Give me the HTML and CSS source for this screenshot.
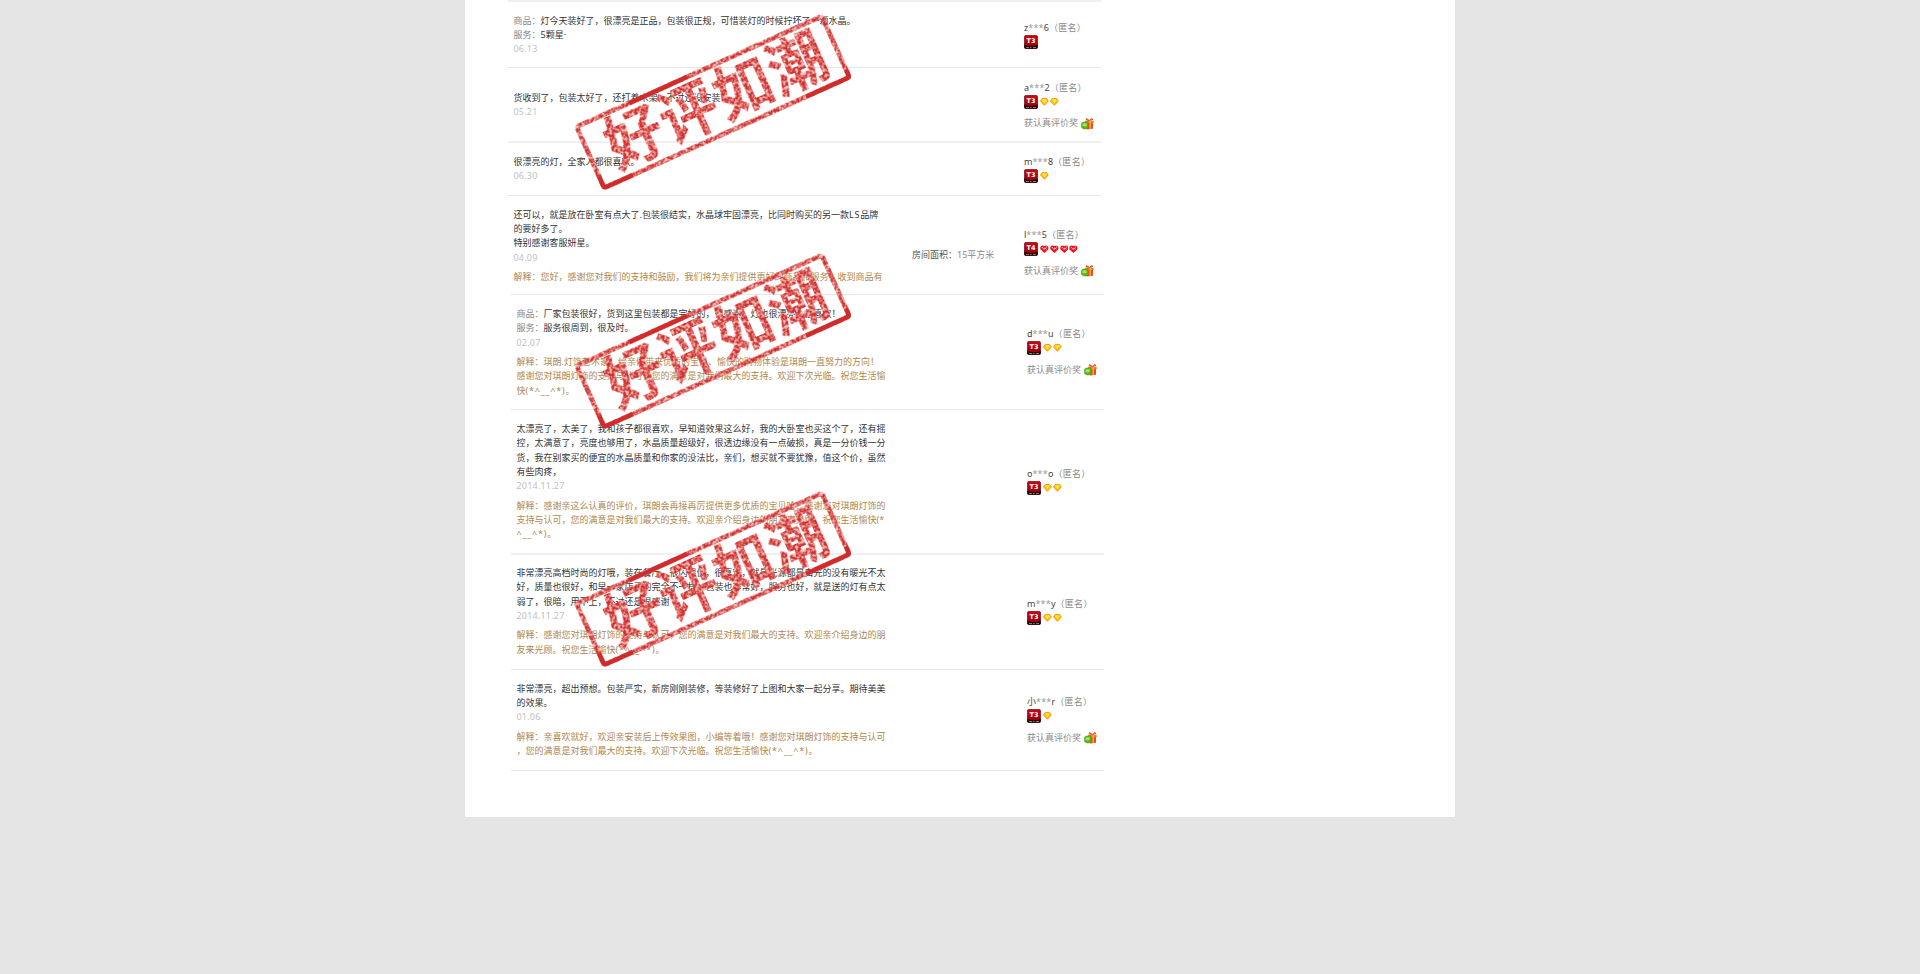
FILE: index.html
```html
<!DOCTYPE html>
<html lang="zh-CN">
<head>
<meta charset="utf-8">
<title>好评如潮</title>
<link rel="stylesheet" href="styles.css">
</head>
<body>
<svg class="defs" aria-hidden="true">
  <defs>
    <linearGradient id="g-badge" x1="0" y1="0" x2="0" y2="1">
      <stop offset="0" stop-color="#c80a14"/><stop offset=".7" stop-color="#a3000c"/><stop offset="1" stop-color="#5a0006"/>
    </linearGradient>
    <symbol id="badge" viewBox="0 0 14 14">
      <rect x=".3" y=".3" width="13.4" height="13.4" rx="2" fill="url(#g-badge)" stroke="#5c0509" stroke-width=".6"/>
      <path d="M.3 9.3 Q2 11 4.4 11 H9.6 Q12 11 13.7 9.3 V12 Q13.7 13.7 12 13.7 H2 Q.3 13.7 .3 12Z" fill="#220305"/>
      <path d="M2 12.6h3M6 12.6h1.6M9 12.6h3" stroke="#a88" stroke-width=".9"/>
    </symbol>
    <symbol id="gem" viewBox="0 0 9 8">
      <path d="M2.2.5H6.8L8.5 2.9 4.5 7.4.5 2.9Z" fill="#ffc400" stroke="#ff8a00" stroke-width=".9"/>
      <path d="M2.7 1.3h3.5l.8 1.5H2Z" fill="#fff04a"/>
      <path d="M3.3 3.3h2.4L4.5 5.2Z" fill="#fff7a8"/>
    </symbol>
    <symbol id="heart" viewBox="0 0 9 8">
      <path d="M4.5 8 L.6 4.4 C-.8 1.800 2.200-1 4.500 1 C6.800-1 9.800 1.800 8.400 4.400Z" fill="#f2101a"/>
      <path d="M2 2l1.500 1.700M4.100 4.800l1-2 1.300 1.500M6.200 2h1" stroke="#ffe0e0" stroke-width="1" fill="none"/>
    </symbol>
    <symbol id="gift" viewBox="0 0 13 12">
      <path d="M4.3 3.6H12V10.8L6 11.4 4.3 9Z" fill="#e9501c"/>
      <path d="M4 2.8H12.7V5H4Z" fill="#f57b26"/>
      <path d="M8.2 2.8 5 1.8 5.5.5 8.4 2.4 10.8.4 12 1.4Z" fill="#f28a22" stroke="#c4401a" stroke-width=".7"/>
      <path d="M9.1 2.8V11" stroke="#ffc14a" stroke-width="1.2"/>
      <path d="M.5 5.3 2 4H7V9L5.3 11H3L.5 9.7Z" fill="#5cb81c" stroke="#469512" stroke-width=".5"/>
      <path d="M1.6 5.4H5.6V8.2H1.6Z" fill="#a7e25a"/>
    </symbol>
    <filter id="ink" x="0" y="0" width="290" height="90" filterUnits="userSpaceOnUse" color-interpolation-filters="sRGB">
      <feTurbulence type="fractalNoise" baseFrequency=".36 .36" numOctaves="2" seed="7" result="fine"/>
      <feColorMatrix in="fine" type="matrix" values="0 0 0 0 .82  0 0 0 0 .18  0 0 0 0 .18  3.6 0 0 0 -1.15" result="grain"/>
      <feComposite in="grain" in2="SourceAlpha" operator="in" result="red"/>
      <feFlood flood-color="#f3c4bc"/>
      <feComposite in2="SourceAlpha" operator="in" result="pale"/>
      <feMerge><feMergeNode in="pale"/><feMergeNode in="red"/></feMerge>
    </filter>
    <symbol id="stamp" viewBox="0 0 290 200">
      <g transform="translate(145 100) rotate(-24.3) translate(-145 -45)">
        <g filter="url(#ink)">
          <rect x="10.5" y="11.5" width="269" height="67" rx="3" fill="none" stroke="#d02a2a" stroke-width="4.6"/>
          <text class="stamp-text" transform="translate(30 66.500) scale(1 1.060)">好评如潮</text>
        </g>
        <path d="M68 11.5H132M232 78.500H277.500Q279.500 78.500 279.500 76.500V70M10.500 66V76.500Q10.500 78.500 12.500 78.500H42" fill="none" stroke="#d02c2c" stroke-width="4.400"/>
      </g>
    </symbol>
  </defs>
</svg>

<main class="sheet">
  <section class="reviews">
    <article class="review r1">
      <div class="comment">
        <p><span class="label">商品：</span>灯今天装好了，很漂亮是正品，包装很正规，可惜装灯的时候拧坏了一颗水晶。</p>
        <p><span class="label">服务：</span>5颗星·</p>
        <p class="date">06.13</p>
      </div>
      <div class="spec"></div>
      <div class="user">
        <p class="name">z<i>***</i>6<span>（匿名）</span></p>
        <div class="rank"><span class="badge"><svg><use href="#badge"/></svg><b>T3</b></span></div>
      </div>
    </article>
    <article class="review r2">
      <div class="comment">
        <p>货收到了，包装太好了，还打着木架，不过还没安装</p>
        <p class="date">05.21</p>
      </div>
      <div class="spec"></div>
      <div class="user">
        <p class="name">a<i>***</i>2<span>（匿名）</span></p>
        <div class="rank"><span class="badge"><svg><use href="#badge"/></svg><b>T3</b></span><svg class="mark"><use href="#gem"/></svg><svg class="mark"><use href="#gem"/></svg></div>
        <p class="award">获认真评价奖<svg class="gift"><use href="#gift"/></svg></p>
      </div>
    </article>
    <article class="review r3">
      <div class="comment">
        <p>很漂亮的灯，全家人都很喜欢。</p>
        <p class="date">06.30</p>
      </div>
      <div class="spec"></div>
      <div class="user">
        <p class="name">m<i>***</i>8<span>（匿名）</span></p>
        <div class="rank"><span class="badge"><svg><use href="#badge"/></svg><b>T3</b></span><svg class="mark"><use href="#gem"/></svg></div>
      </div>
    </article>
    <article class="review r4">
      <div class="comment">
        <p>还可以，就是放在卧室有点大了.包装很结实，水晶球牢固漂亮，比同时购买的另一款<span class="latin">LS</span>品牌</p>
        <p>的要好多了。</p>
        <p>特别感谢客服妍星。</p>
        <p class="date">04.09</p>
        <div class="reply"><p>解释：您好，感谢您对我们的支持和鼓励，我们将为亲们提供更好的商品和服务，收到商品有</p></div>
      </div>
      <div class="spec">房间面积：<span>15平方米</span></div>
      <div class="user">
        <p class="name">l<i>***</i>5<span>（匿名）</span></p>
        <div class="rank"><span class="badge"><svg><use href="#badge"/></svg><b>T4</b></span><svg class="mark"><use href="#heart"/></svg><svg class="mark"><use href="#heart"/></svg><svg class="mark"><use href="#heart"/></svg><svg class="mark"><use href="#heart"/></svg></div>
        <p class="award">获认真评价奖<svg class="gift"><use href="#gift"/></svg></p>
      </div>
    </article>
  </section>

  <section class="reviews reviews-late">
    <article class="review r5">
      <div class="comment">
        <p><span class="label">商品：</span>厂家包装很好，货到这里包装都是完好的，很感谢，灯也很漂亮，很喜欢！</p>
        <p><span class="label">服务：</span>服务很周到，很及时。</p>
        <p class="date">02.07</p>
        <div class="reply">
          <p>解释：琪朗.灯饰艺术家！给亲们带来优质的宝贝、愉快的购物体验是琪朗一直努力的方向！</p>
          <p>感谢您对琪朗灯饰的支持与认可，您的满意是对我们最大的支持。欢迎下次光临。祝您生活愉</p>
          <p>快<span class="latin">(*^__^*)</span>。</p>
        </div>
      </div>
      <div class="spec"></div>
      <div class="user">
        <p class="name">d<i>***</i>u<span>（匿名）</span></p>
        <div class="rank"><span class="badge"><svg><use href="#badge"/></svg><b>T3</b></span><svg class="mark"><use href="#gem"/></svg><svg class="mark"><use href="#gem"/></svg></div>
        <p class="award">获认真评价奖<svg class="gift"><use href="#gift"/></svg></p>
      </div>
    </article>
    <article class="review r6">
      <div class="comment">
        <p>太漂亮了，太美了，我和孩子都很喜欢，早知道效果这么好，我的大卧室也买这个了，还有摇</p>
        <p>控，太满意了，亮度也够用了，水晶质量超级好，很透边缘没有一点破损，真是一分价钱一分</p>
        <p>货，我在别家买的便宜的水晶质量和你家的没法比，亲们，想买就不要犹豫，值这个价，虽然</p>
        <p>有些肉疼，</p>
        <p class="date">2014.11.27</p>
        <div class="reply">
          <p>解释：感谢亲这么认真的评价，琪朗会再接再厉提供更多优质的宝贝哈！感谢您对琪朗灯饰的</p>
          <p>支持与认可，您的满意是对我们最大的支持。欢迎亲介绍身边的朋友来光顾。祝您生活愉快(*</p>
          <p><span class="latin">^__^*)</span>。</p>
        </div>
      </div>
      <div class="spec"></div>
      <div class="user">
        <p class="name">o<i>***</i>o<span>（匿名）</span></p>
        <div class="rank"><span class="badge"><svg><use href="#badge"/></svg><b>T3</b></span><svg class="mark"><use href="#gem"/></svg><svg class="mark"><use href="#gem"/></svg></div>
      </div>
    </article>
    <article class="review r7">
      <div class="comment">
        <p>非常漂亮高档时尚的灯哦，装在餐厅，很闪很值，很喜欢，就是光源都是白光的没有暖光不太</p>
        <p>好，质量也很好，和早一家店买的完全不一样，包装也非常好，服务也好，就是送的灯有点太</p>
        <p>弱了，很暗，用不上，不过还是很感谢</p>
        <p class="date">2014.11.27</p>
        <div class="reply">
          <p>解释：感谢您对琪朗灯饰的支持与认可，您的满意是对我们最大的支持。欢迎亲介绍身边的朋</p>
          <p>友来光顾。祝您生活愉快<span class="latin">(*^__^*)</span>。</p>
        </div>
      </div>
      <div class="spec"></div>
      <div class="user">
        <p class="name">m<i>***</i>y<span>（匿名）</span></p>
        <div class="rank"><span class="badge"><svg><use href="#badge"/></svg><b>T3</b></span><svg class="mark"><use href="#gem"/></svg><svg class="mark"><use href="#gem"/></svg></div>
      </div>
    </article>
    <article class="review r8">
      <div class="comment">
        <p>非常漂亮，超出预想。包装严实，新房刚刚装修，等装修好了上图和大家一起分享。期待美美</p>
        <p>的效果。</p>
        <p class="date">01.06</p>
        <div class="reply">
          <p>解释：亲喜欢就好，欢迎亲安装后上传效果图，小编等着哦！感谢您对琪朗灯饰的支持与认可</p>
          <p>，您的满意是对我们最大的支持。欢迎下次光临。祝您生活愉快<span class="latin">(*^__^*)</span>。</p>
        </div>
      </div>
      <div class="spec"></div>
      <div class="user">
        <p class="name">小<i>***</i>r<span>（匿名）</span></p>
        <div class="rank"><span class="badge"><svg><use href="#badge"/></svg><b>T3</b></span><svg class="mark"><use href="#gem"/></svg></div>
        <p class="award">获认真评价奖<svg class="gift"><use href="#gift"/></svg></p>
      </div>
    </article>
  </section>

  <svg class="stamp s1"><use href="#stamp"/></svg>
  <svg class="stamp s2"><use href="#stamp"/></svg>
  <svg class="stamp s3"><use href="#stamp"/></svg>
</main>
</body>
</html>
```

FILE: styles.css
```css
* { box-sizing: border-box; }

body {
  margin: 0;
  background: #e5e5e5;
  color: #333;
  font: 9px/14.3px "Noto Sans", "Noto Sans CJK SC", sans-serif;
}

p { margin: 0; white-space: nowrap; }

.defs { position: absolute; width: 0; height: 0; }

.sheet {
  position: relative;
  width: 990px;
  height: 817px;
  margin: 0 auto;
  background: #fff;
  overflow: hidden;
}

.reviews { width: 593px; margin-left: 43px; border-top: 2px solid #efefef; }
.reviews-late { margin-left: 46px; border-top: 0; }

.review {
  display: grid;
  grid-template-columns: 398.500px 112px 1fr;
  padding-left: 5.500px;
  height: var(--h);
  border-bottom: var(--line, 1px solid #e6e6e6);
}
.r4 { border-bottom: 0; }
.reviews-late .r5 { border-top: 1px solid #e6e6e6; }

.comment { padding-top: var(--text); }
.spec { padding-top: var(--spec, 0); white-space: nowrap; color: #555; }
.spec span { color: #8a8a8a; }
.user { padding-top: var(--user); }

/* Row height, then the top inset of each column */
.r1 { --h: 66px; --text: 11.600px; --user: 18.600px; }
.r2 { --h: 75px; --text: 22.500px; --user: 12.500px; --line: 2px solid #f0f0f0; }
.r3 { --h: 53px; --text: 11.600px; --user: 12px; }
.r4 { --h: 98px; --text: 11.800px; --user: 32px; --spec: 51.800px; }
.r5 { --h: 116px; --text: 12px; --user: 32px; }
.r6 { --h: 145px; --text: 12px; --user: 57px; --line: 2px solid #f0f0f0; }
.r7 { --h: 115px; --text: 11px; --user: 42px; }
.r8 { --h: 101px; --text: 11.500px; --user: 25px; }

.label { color: #858585; }
.date { color: #bfbfbf; letter-spacing: .2px; }
.reply { margin-top: 5.200px; color: #af874d; }
.latin { letter-spacing: .8px; }

.name { color: #444; }
.name i { font-style: normal; color: #999; letter-spacing: .2px; }
.name span { color: #8a8a8a; letter-spacing: .3px; }

.rank { display: flex; align-items: center; gap: 1px; height: 14.300px; }
.badge { position: relative; width: 14px; height: 14px; margin-right: 1px; }
.badge svg { display: block; width: 14px; height: 14px; }
.badge b {
  position: absolute;
  inset: 0 0 auto;
  color: #fff;
  font: bold 6.500px/12px "DejaVu Sans", sans-serif;
  text-align: center;
}
.mark { width: 8.800px; height: 8px; }

.award { display: flex; align-items: center; gap: 3px; margin-top: 7.300px; color: #8a8a8a; }
.gift { width: 13px; height: 12px; }

.stamp { position: absolute; left: 102.500px; width: 290px; height: 200px; }
.s1 { top: 2px; }
.s2 { top: 240.500px; }
.s3 { top: 479px; }
.stamp-text {
  font: bold 58px "Noto Sans CJK SC", sans-serif;
  letter-spacing: 1.500px;
  fill: #d02a2a;
}
```
